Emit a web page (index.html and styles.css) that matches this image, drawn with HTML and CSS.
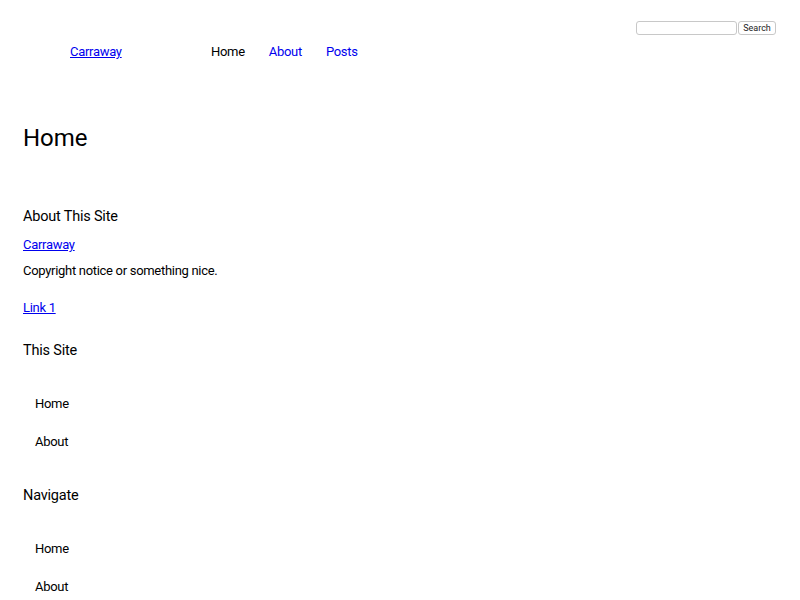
FILE: index.html
```html
<!DOCTYPE html>
<html lang="en">

<head>
    <meta charset="UTF-8">
    <meta name="viewport" content="width=device-width, initial-scale=1.0">
    <title>Carraway</title>
    <link rel="stylesheet" href="styles.css">
</head>

<body>
<header class="site-header">
    <form class="search-form">
        <input class="search-input" type="text">
        <button class="search-button" type="button">Search</button>
    </form>
    <nav class="main-nav">
        <a class="brand" href="#">Carraway</a>
        <ul class="nav-links">
            <li class="nav-item current">Home</li>
            <li class="nav-item"><a href="#">About</a></li>
            <li class="nav-item"><a href="#">Posts</a></li>
        </ul>
    </nav>
</header>

<main class="content">
    <h1 class="page-title">Home</h1>
</main>

<footer class="site-footer">
    <section class="widget">
        <h3 class="widget-title">About This Site</h3>
        <p><a href="#">Carraway</a></p>
        <p>Copyright notice or something nice.</p>
        <p class="extra-link"><a href="#">Link 1</a></p>
    </section>
    <section class="widget">
        <h3 class="widget-title">This Site</h3>
        <ul class="widget-list">
            <li>Home</li>
            <li>About</li>
        </ul>
    </section>
    <section class="widget">
        <h3 class="widget-title">Navigate</h3>
        <ul class="widget-list">
            <li>Home</li>
            <li>About</li>
        </ul>
    </section>
</footer>
</body>

</html>
```

FILE: styles.css
```css
body {
    margin: 0;
    padding: 0 23px;
    font-family: Roboto, "Liberation Sans", sans-serif;
    font-size: 13px;
    letter-spacing: -0.3px;
    line-height: 16px;
    color: #000;
}

a {
    color: #0000ee;
}

ul {
    list-style: none;
    padding-left: 0;
    margin: 0;
}

.site-header {
    padding-top: 21px;
}

.search-form {
    display: flex;
    justify-content: flex-end;
    margin-right: 1px;
}

.search-input {
    width: 101px;
    height: 14px;
    box-sizing: border-box;
    border: 1px solid #c8c8c8;
    border-radius: 3px;
    padding: 0 3px;
    font-size: 10px;
}

.search-button {
    width: 38px;
    height: 14px;
    margin-left: 1px;
    padding: 0;
    border: 1px solid #c8c8c8;
    border-radius: 3px;
    background: #fff;
    font-family: Roboto, sans-serif;
    font-size: 9px;
    letter-spacing: 0;
    color: #222;
    line-height: 12px;
}

.main-nav {
    display: flex;
    padding-left: 47px;
    margin-top: 9px;
}

.brand {
    width: 141px;
}

.nav-links {
    display: flex;
    gap: 24px;
}

.nav-item a {
    text-decoration: none;
}

.page-title {
    font-size: 24px;
    line-height: 30px;
    letter-spacing: 0;
    font-weight: 400;
    margin: 63px 0 0;
}

.site-footer {
    margin-top: 55px;
}

.widget-title {
    font-size: 14.5px;
    line-height: 18px;
    letter-spacing: -0.2px;
    font-weight: 400;
    margin: 0 0 11px;
}

.widget p {
    margin: 0 0 10px;
}

.widget .extra-link {
    margin-top: 21px;
    margin-bottom: 26px;
}

.widget-list {
    padding: 25px 0 0 12px;
    margin-bottom: 37px;
}

.widget-list li {
    margin-bottom: 22px;
}
```
